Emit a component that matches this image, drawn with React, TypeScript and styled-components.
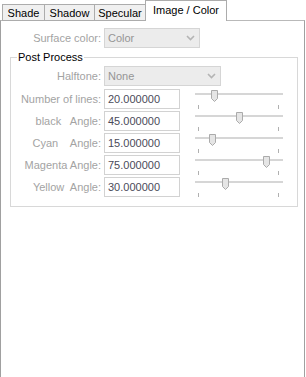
import { Fragment } from 'react';
import styled, { createGlobalStyle } from 'styled-components';

const GlobalStyle = createGlobalStyle`
    html, body {
        margin: 0;
        padding: 0;
        background: #ffffff;
    }
    body {
        font-family: "Liberation Sans", Arial, sans-serif;
        font-size: 11px;
        color: #000;
        overflow: hidden;
    }
`

const Page = styled.div`
    width: 306px;
    height: 377px;
    display: flex;
    flex-direction: column;
`

const TabStrip = styled.div`
    display: flex;
    align-items: flex-end;
    height: 21px;
    padding-left: 2px;
    margin-bottom: -1px;
    position: relative;
    z-index: 1;
`

const Tab = styled.div<{ $width: number; $active?: boolean }>`
    box-sizing: border-box;
    width: ${p => p.$width}px;
    height: ${p => (p.$active ? 21 : 17)}px;
    margin-left: -1px;
    display: flex;
    align-items: center;
    justify-content: center;
    padding-bottom: ${p => (p.$active ? 2 : 0)}px;
    border: 1px solid #acacac;
    border-bottom: ${p => (p.$active ? 'none' : '1px solid #acacac')};
    background: ${p => (p.$active ? '#ffffff' : '#f0f0f0')};
    color: #000;
    white-space: nowrap;

    &:first-child {
        margin-left: 0;
    }
`

const Panel = styled.div`
    box-sizing: border-box;
    width: 305px;
    flex: 1;
    margin-bottom: -2px;
    border: 1px solid #a0a0a0;
    border-top-color: #b9b9b9;
    padding-top: 7px;
`

const Row = styled.div`
    display: grid;
    grid-template-columns: 100px 96px;
    column-gap: 3px;
    align-items: center;
`

const Label = styled.span`
    color: #a3a3a3;
    text-align: right;
    white-space: pre;
`

const Select = styled.div<{ $width: number }>`
    box-sizing: border-box;
    width: ${p => p.$width}px;
    height: 20px;
    border: 1px solid #d5d5d5;
    background: #ececec;
    color: #959595;
    display: flex;
    align-items: center;
    justify-content: space-between;
    padding: 0 4px 0 3px;
`

const Group = styled.fieldset`
    box-sizing: border-box;
    width: 288px;
    margin: 2px 0 0 9px;
    padding: 2px 0 9px 0;
    border: 1px solid #d8d8d8;
`

const Legend = styled.legend`
    margin-left: 6px;
    padding: 0 1px;
    line-height: 14px;
    color: #000;
`

const Form = styled.div`
    display: grid;
    grid-template-columns: 90px 76px 100px;
    column-gap: 3px;
    row-gap: 2px;
    align-items: start;
`

const FormLabel = styled(Label)`
    line-height: 20px;
`

const WideCell = styled.div`
    grid-column: 2 / span 2;
    padding-bottom: 1px;
`

const NumberBox = styled.div`
    box-sizing: border-box;
    width: 76px;
    height: 20px;
    border: 1px solid #d2d2d2;
    background: #fff;
    color: #4b4b5a;
    display: flex;
    align-items: center;
    padding-left: 3px;
`

const SliderBox = styled.div`
    position: relative;
    width: 88px;
    height: 20px;
    margin-left: 12px;
    display: flex;
    flex-direction: column;
`

const Track = styled.div`
    box-sizing: border-box;
    margin-top: 4px;
    height: 4px;
    background: #e6e6e6;
    border: 1px solid #d6d6d6;
`

const Ticks = styled.div`
    display: flex;
    justify-content: space-between;
    padding: 0 4px 0 3px;
    margin-top: 10px;
`

const Tick = styled.div`
    width: 1px;
    height: 4px;
    background: #b0b0b0;
`

const Thumb = styled.svg`
    position: absolute;
    top: 1px;
    width: 7px;
    height: 12px;
`

function Chevron() {
    return (
        <svg width="9" height="6" viewBox="0 0 9 6">
            <path d="M1 1 L4.5 4.5 L8 1" fill="none" stroke="#b4b4b4" strokeWidth="1.6" />
        </svg>
    )
}

function Slider({ value, max }: { value: number; max: number }) {
    const left = Math.round((value / max) * 81);
    return (
        <SliderBox>
            <Track />
            <Ticks>
                <Tick />
                <Tick />
            </Ticks>
            <Thumb viewBox="0 0 7 12" style={{ left }}>
                <path d="M0.5 0.5 H6.5 V8.5 L3.5 11.5 L0.5 8.5 Z" fill="#e5e5e5" stroke="#ababab" strokeWidth="1" />
            </Thumb>
        </SliderBox>
    )
}

const rows = [
    { label: 'Number of lines:', value: 20, max: 100 },
    { label: 'black   Angle:', value: 45, max: 90 },
    { label: 'Cyan    Angle:', value: 15, max: 90 },
    { label: 'Magenta Angle:', value: 75, max: 90 },
    { label: 'Yellow  Angle:', value: 30, max: 90 },
];

export default function App() {
    return (
        <Page>
            <GlobalStyle />
            <TabStrip>
                <Tab $width={43}>Shade</Tab>
                <Tab $width={51}>Shadow</Tab>
                <Tab $width={52}>Specular</Tab>
                <Tab $width={82} $active>Image / Color</Tab>
            </TabStrip>
            <Panel>
                <Row>
                    <Label>Surface color:</Label>
                    <Select $width={96}>
                        <span>Color</span>
                        <Chevron />
                    </Select>
                </Row>
                <Group>
                    <Legend>Post Process</Legend>
                    <Form>
                        <FormLabel>Halftone:</FormLabel>
                        <WideCell>
                            <Select $width={117}>
                                <span>None</span>
                                <Chevron />
                            </Select>
                        </WideCell>
                        {rows.map(r => (
                            <Fragment key={r.label}>
                                <FormLabel>{r.label}</FormLabel>
                                <NumberBox>{r.value.toFixed(6)}</NumberBox>
                                <Slider value={r.value} max={r.max} />
                            </Fragment>
                        ))}
                    </Form>
                </Group>
            </Panel>
        </Page>
    )
}
